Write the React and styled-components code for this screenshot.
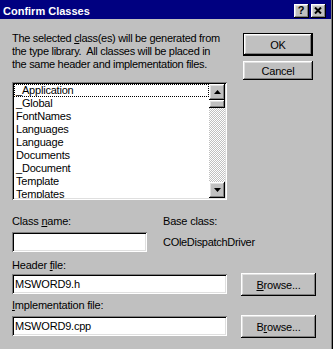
import React from "react";
import styled, { createGlobalStyle, css } from "styled-components";

const GlobalStyle = createGlobalStyle`
  html, body {
    margin: 0;
    padding: 0;
    background: #c0c0c0;
  }
  body {
    font-family: "Liberation Sans", Arial, sans-serif;
    font-size: 11px;
    color: #000;
  }
`;

const raised = css`
  background: #c0c0c0;
  box-shadow: inset -1px -1px #000, inset 1px 1px #fff, inset -2px -2px #808080,
    inset 2px 2px #dfdfdf;
`;

const sunken = css`
  background: #fff;
  box-shadow: inset 1px 1px #808080, inset -1px -1px #fff, inset 2px 2px #000,
    inset -2px -2px #dfdfdf;
`;

const classes = [
  "_Application",
  "_Global",
  "FontNames",
  "Languages",
  "Language",
  "Documents",
  "_Document",
  "Template",
  "Templates",
];

const Arrow = ({ up }) => (
  <svg width="7" height="4" viewBox="0 0 7 4">
    <path d={up ? "M3.5 0 L7 4 L0 4 Z" : "M0 0 L7 0 L3.5 4 Z"} fill="#000" />
  </svg>
);

const App = () => {
  return (
    <>
      <GlobalStyle />
      <Window>
        <TitleBar>
          <Title>Confirm Classes</Title>
          <CaptionButtons>
            <CapBtn>?</CapBtn>
            <CapBtn>
              <svg width="8" height="7" viewBox="0 0 8 7">
                <path d="M1 0.5 L7 6.5 M7 0.5 L1 6.5" stroke="#000" strokeWidth="2" />
              </svg>
            </CapBtn>
          </CaptionButtons>
        </TitleBar>

        <Body>
          <TopRow>
            <LeftCol>
              <Intro>
                <div>
                  The selected <u>c</u>lass(es) will be generated from
                </div>
                <div>the type library.  All classes will be placed in</div>
                <div>the same header and implementation files.</div>
              </Intro>
              <ListBox>
                <Items>
                  {classes.map((name, i) => (
                    <Item key={name} $focus={i === 0}>
                      {name}
                    </Item>
                  ))}
                </Items>
                <ScrollBar>
                  <ScrollBtn>
                    <Arrow up />
                  </ScrollBtn>
                  <Thumb />
                  <Track />
                  <ScrollBtn>
                    <Arrow />
                  </ScrollBtn>
                </ScrollBar>
              </ListBox>
            </LeftCol>
            <RightCol>
              <PushButton $default $h={23}>
                OK
              </PushButton>
              <PushButton $h={19}>Cancel</PushButton>
            </RightCol>
          </TopRow>

          <ClassRow>
            <ClassCol>
              <Label>
                Class <u>n</u>ame:
              </Label>
              <Field $w={135} />
            </ClassCol>
            <BaseCol>
              <Label>Base class:</Label>
              <Value>COleDispatchDriver</Value>
            </BaseCol>
          </ClassRow>

          <Label $top={7}>
            Header <u>f</u>ile:
          </Label>
          <FileRow $top={1}>
            <Field $w={215}>MSWORD9.h</Field>
            <PushButton $h={23} $w={75}>
              <u>B</u>rowse...
            </PushButton>
          </FileRow>

          <Label $top={3}>
            <u>I</u>mplementation file:
          </Label>
          <FileRow $top={3}>
            <Field $w={215}>MSWORD9.cpp</Field>
            <PushButton $h={23} $w={75}>
              B<u>r</u>owse...
            </PushButton>
          </FileRow>
        </Body>
      </Window>
    </>
  );
};

export default App;

const Window = styled.div`
  width: 333px;
  height: 349px;
  box-sizing: border-box;
  background: #c0c0c0;
  border-right: 1px solid #000;
  box-shadow: inset -1px 0 #808080;
  padding-right: 1px;
  overflow: hidden;
  display: flex;
  flex-direction: column;
`;

const TitleBar = styled.div`
  height: 19px;
  box-sizing: border-box;
  background: #000080;
  display: flex;
  align-items: flex-start;
  padding: 4px 5px 0 3px;
`;

const Title = styled.div`
  color: #fff;
  font-weight: bold;
  font-size: 11px;
  line-height: 13px;
  margin-top: 1px;
  white-space: nowrap;
`;

const CaptionButtons = styled.div`
  margin-left: auto;
  display: flex;
  gap: 2px;
`;

const CapBtn = styled.div`
  ${raised};
  width: 15px;
  height: 14px;
  box-sizing: border-box;
  display: flex;
  align-items: center;
  justify-content: center;
  font-weight: bold;
  font-size: 11px;
  line-height: 11px;
  padding: 0 1px 1px 0;
`;

const Body = styled.div`
  padding: 13px 0 0 12px;
  display: flex;
  flex-direction: column;
`;

const TopRow = styled.div`
  display: flex;
  align-items: flex-start;
`;

const LeftCol = styled.div`
  width: 215px;
  display: flex;
  flex-direction: column;
`;

const Intro = styled.div`
  line-height: 13px;
  letter-spacing: -0.3px;
  white-space: pre;
`;

const ListBox = styled.div`
  ${sunken};
  margin-top: 11px;
  height: 118px;
  box-sizing: border-box;
  padding: 2px;
  display: flex;
`;

const Items = styled.div`
  flex: 1;
  overflow: hidden;
`;

const Item = styled.div`
  height: 13px;
  box-sizing: border-box;
  padding-left: 1px;
  white-space: nowrap;
  letter-spacing: -0.2px;
  line-height: 11px;
  border: 1px dotted ${(p) => (p.$focus ? "#000" : "transparent")};
`;

const ScrollBar = styled.div`
  width: 16px;
  display: flex;
  flex-direction: column;
`;

const ScrollBtn = styled.div`
  ${raised};
  height: 16px;
  display: flex;
  align-items: center;
  justify-content: center;
`;

const Thumb = styled.div`
  ${raised};
  height: 8px;
`;

const Track = styled.div`
  flex: 1;
  background-color: #c0c0c0;
  background-image: conic-gradient(#fff 25%, #c0c0c0 0 50%, #fff 0 75%, #c0c0c0 0);
  background-size: 2px 2px;
`;

const RightCol = styled.div`
  margin-left: 16px;
  margin-top: 1px;
  display: flex;
  flex-direction: column;
  gap: 5px;
`;

const PushButton = styled.div`
  ${raised};
  width: ${(p) => p.$w || 70}px;
  height: ${(p) => p.$h}px;
  box-sizing: border-box;
  display: flex;
  align-items: center;
  justify-content: center;
  letter-spacing: -0.2px;
  ${(p) =>
    p.$default &&
    css`
      border: 1px solid #000;
    `}
`;

const ClassRow = styled.div`
  display: flex;
  margin-top: 15px;
`;

const ClassCol = styled.div`
  display: flex;
  flex-direction: column;
  gap: 4px;
`;

const BaseCol = styled.div`
  margin-left: 16px;
  display: flex;
  flex-direction: column;
`;

const Label = styled.div`
  line-height: 13px;
  letter-spacing: -0.2px;
  margin-top: ${(p) => p.$top || 0}px;
`;

const Value = styled.div`
  line-height: 13px;
  letter-spacing: -0.3px;
  margin-top: 8px;
`;

const Field = styled.div`
  ${sunken};
  width: ${(p) => p.$w}px;
  height: 20px;
  box-sizing: border-box;
  padding: 0 3px;
  display: flex;
  align-items: center;
  letter-spacing: -0.2px;
  white-space: nowrap;
`;

const FileRow = styled.div`
  display: flex;
  align-items: flex-start;
  gap: 14px;
  margin-top: ${(p) => p.$top}px;

  > ${Field} {
    margin-top: 1px;
  }
`;
